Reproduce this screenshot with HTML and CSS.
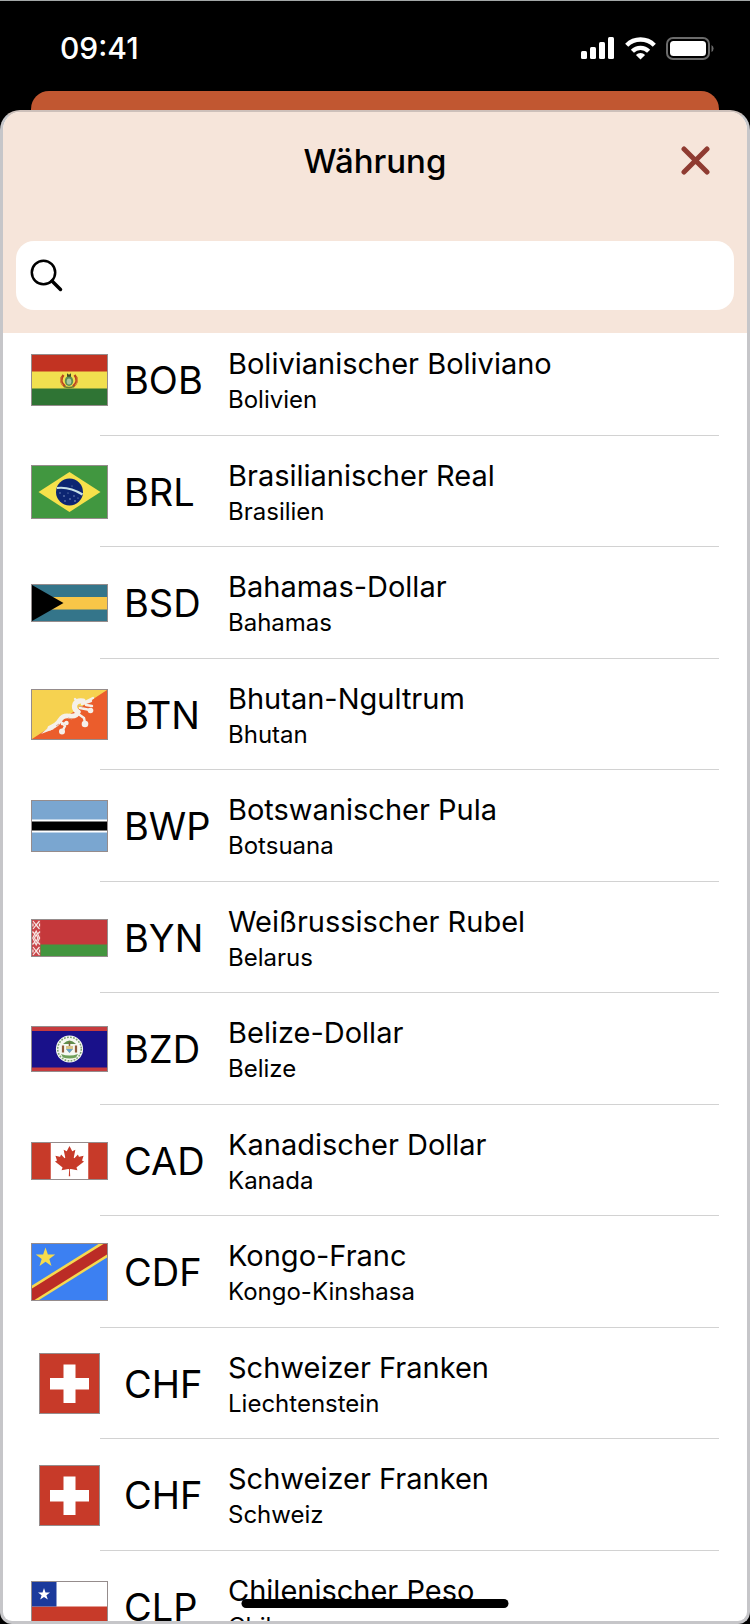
FILE: index.html
```html
<!DOCTYPE html>
<html lang="de">
<head>
<meta charset="utf-8">
<meta name="viewport" content="width=device-width, initial-scale=1">
<title>Währung</title>
<link rel="stylesheet" href="styles.css">
</head>
<body>
<div class="screen">
  <div class="status-bar">
    <time class="clock">09:41</time>
    <div class="status-icons">
      <svg width="34" height="22" viewBox="0 0 34 22" fill="#fff" aria-hidden="true"><rect x="0" y="14" width="6" height="8" rx="1.5"/><rect x="9" y="10" width="6" height="12" rx="1.5"/><rect x="18" y="5" width="6" height="17" rx="1.5"/><rect x="27" y="0" width="6" height="22" rx="1.5"/></svg>
      <svg width="31" height="23" viewBox="0 0 31 23" aria-hidden="true"><g fill="none" stroke="#fff" stroke-width="4.4"><path d="M1.7 8.2a19.6 19.6 0 0 1 27.6 0"/><path d="M7.4 14.2a11.5 11.5 0 0 1 16.2 0"/></g><path d="M15.500 22.500l-4.600-4.600a6.600 6.600 0 0 1 9.200 0z" fill="#fff"/></svg>
      <svg width="49" height="23" viewBox="0 0 49 23" aria-hidden="true"><rect x="1" y="1" width="42" height="21" rx="6" fill="none" stroke="#6b6b6b" stroke-width="2"/><rect x="4" y="4" width="36" height="15" rx="3.500" fill="#fff"/><path d="M45.500 8a4 4 0 0 1 0 7z" fill="#6b6b6b"/></svg>
    </div>
  </div>
  <div class="card-behind"></div>
  <main class="sheet">
    <header class="sheet-header">
      <div class="title-bar">
        <h1 class="title">Währung</h1>
        <button class="close" type="button" aria-label="Schließen">
          <svg width="30" height="30" viewBox="0 0 30 30" aria-hidden="true"><path d="M3 3l23 23M26 3l-23 23" stroke="#8f3b31" stroke-width="5" stroke-linecap="round"/></svg>
        </button>
      </div>
      <label class="search">
        <svg width="34" height="34" viewBox="0 0 34 34" fill="none" stroke="#000" aria-hidden="true"><circle cx="13.500" cy="13.500" r="11.700" stroke-width="2.500"/><path d="M22 22l8.500 8.500" stroke-width="3.500" stroke-linecap="round"/></svg>
        <input class="search-input" type="search" aria-label="Währung suchen">
      </label>
    </header>
    <div class="scroller">
      <ul class="list">
        <li class="item"><button class="row" type="button">
          <svg class="flag" width="77" height="52" viewBox="0 0 75 50" aria-hidden="true"><path fill="#c23322" d="M0 0h75v17H0z"/><path fill="#f1e04f" d="M0 16.500h75V34H0z"/><path fill="#2f7434" d="M0 33.500h75V50H0z"/><path d="M31.500 20q-5 6 1.500 11.500M42.500 20q5 6-1.500 11.500" fill="none" stroke="#b9431f" stroke-width="2.400"/><path d="M29 22q-1.500 5 2 8.500M45 22q1.500 5-2 8.500" fill="none" stroke="#d98a3a" stroke-width="1.200"/><path d="M32 31.500q5 2 10 0" fill="none" stroke="#6d7b32" stroke-width="1.400"/><ellipse cx="37" cy="26" rx="4.200" ry="5" fill="#5b8f55"/><ellipse cx="37" cy="26.500" rx="2.300" ry="3" fill="#a9c8a0"/><path d="M35 18.200l2 1.600 2-1.600v3.600h-4z" fill="#444b27"/></svg>
          <span class="code">BOB</span><span class="text"><span class="name">Bolivianischer Boliviano</span><span class="country">Bolivien</span></span></button></li>
        <li class="item"><button class="row" type="button">
          <svg class="flag" width="77" height="54" viewBox="0 0 75 52" aria-hidden="true"><path fill="#419740" d="M0 0h75v52H0z"/><path fill="#f7e14b" d="M6.500 26l31-20 31 20-31 20z"/><circle cx="37.500" cy="26" r="13.500" fill="#0c2572"/><path d="M24.800 22q13-1.600 25.700 6.500" fill="none" stroke="#c7e0e6" stroke-width="2.200"/><g fill="#8fa4cc"><circle cx="28" cy="27" r=".7"/><circle cx="32" cy="30" r=".8"/><circle cx="36" cy="27" r=".6"/><circle cx="38" cy="33" r=".8"/><circle cx="42" cy="30" r=".7"/><circle cx="43" cy="35" r=".8"/><circle cx="33" cy="35" r=".7"/><circle cx="46" cy="32" r=".6"/><circle cx="40" cy="20" r=".6"/></g></svg>
          <span class="code">BRL</span><span class="text"><span class="name">Brasilianischer Real</span><span class="country">Brasilien</span></span></button></li>
        <li class="item"><button class="row" type="button">
          <svg class="flag" width="77" height="38" viewBox="0 0 75 36" aria-hidden="true"><path fill="#34758a" d="M0 0h75v36H0z"/><path fill="#f8c648" d="M0 12h75v12.500H0z"/><path d="M0 0l31.500 18L0 36z"/></svg>
          <span class="code">BSD</span><span class="text"><span class="name">Bahamas-Dollar</span><span class="country">Bahamas</span></span></button></li>
        <li class="item"><button class="row" type="button">
          <svg class="flag" width="77" height="51" viewBox="0 0 75 49" aria-hidden="true"><path fill="#f6d250" d="M0 0h75v49H0z"/><path fill="#eb5d2c" d="M75 0v49H0z"/><g fill="none" stroke="#f5f0ea" stroke-linecap="round" stroke-linejoin="round"><path d="M18 38q7-3 10-8 3-5 9-4 8 1 9-4" stroke-width="4.800"/><path d="M46 22q-5-3-3-8 2-4 8-3" stroke-width="5.200"/><path d="M29 32l4 4-3 6M45 23l7 5 1 5M48 18l10 2M50 14l9-3M53 12l8-4M30 34l5-1M43 9l3 3M54 15l6 1" stroke-width="2.400"/></g><g fill="#f5f0ea"><circle cx="30" cy="41.500" r="3"/><circle cx="53" cy="34" r="3.300"/><circle cx="58.500" cy="20.500" r="2.800"/><circle cx="34.500" cy="33" r="2.200"/><path d="M9 44l9-8 4 3z"/></g><path d="M46 16l5 1M36 28l4 1M24 36l3-2" stroke="#d9a18a" stroke-width="1"/></svg>
          <span class="code">BTN</span><span class="text"><span class="name">Bhutan-Ngultrum</span><span class="country">Bhutan</span></span></button></li>
        <li class="item"><button class="row" type="button">
          <svg class="flag" width="77" height="52" viewBox="0 0 75 50" aria-hidden="true"><path fill="#7aa6d0" d="M0 0h75v50H0z"/><path fill="#fff" d="M0 18.500h75v13H0z"/><path d="M0 20.500h75v9H0z"/></svg>
          <span class="code">BWP</span><span class="text"><span class="name">Botswanischer Pula</span><span class="country">Botsuana</span></span></button></li>
        <li class="item"><button class="row" type="button">
          <svg class="flag" width="77" height="38" viewBox="0 0 75 36" aria-hidden="true"><path fill="#c5383b" d="M0 0h75v25H0z"/><path fill="#43953f" d="M0 24.500h75V36H0z"/><path fill="#c9464a" d="M0 0h8.500v36H0z"/><g fill="none" stroke="#f8e9e6" stroke-width="1.200"><path d="M1 1l3.200 4L7.500 1M1 9l3.200-4 3.300 4M1 3.500v3M7.500 3.500v3"/><path d="M4.200 11L.8 18l3.400 7 3.400-7zM4.200 14.500L2.500 18l1.700 3.500L5.900 18zM.5 11.500l1.800 2M8 11.500l-1.800 2M.5 24.500l1.800-2M8 24.500l-1.800-2"/><path d="M1 27l3.200 4 3.300-4M1 35l3.200-4 3.300 4M1 29.500v3M7.500 29.500v3"/></g></svg>
          <span class="code">BYN</span><span class="text"><span class="name">Weißrussischer Rubel</span><span class="country">Belarus</span></span></button></li>
        <li class="item"><button class="row" type="button">
          <svg class="flag" width="77" height="46" viewBox="0 0 75 44" aria-hidden="true"><path fill="#c63b3e" d="M0 0h75v44H0z"/><path fill="#19118a" d="M0 4h75v36.500H0z"/><circle cx="37.500" cy="22" r="13.600" fill="#f6f8f2"/><circle cx="37.500" cy="22" r="11.800" fill="none" stroke="#7fa572" stroke-width="1.500" stroke-dasharray="1.800 1.300"/><path d="M31 17q6.500-7 13 0z" fill="#618d4b"/><path d="M37.500 15v5" stroke="#7d6540" stroke-width="1.500"/><path d="M34 19h7v3l-3.500 4-3.500-4z" fill="#d8c58a"/><path d="M34 22h7l-3.500 4z" fill="#69a3c6"/><path d="M31 18.500v7M44 18.500v7" stroke="#8d5c3b" stroke-width="2.200"/><path d="M29 27q8.500 3 17 0l-2 3.500q-6.500 2-13 0z" fill="#6fa05a"/></svg>
          <span class="code">BZD</span><span class="text"><span class="name">Belize-Dollar</span><span class="country">Belize</span></span></button></li>
        <li class="item"><button class="row" type="button">
          <svg class="flag" width="77" height="38" viewBox="0 0 9600 4800" preserveAspectRatio="none" aria-hidden="true"><path fill="#c73a29" d="M0 0h9600v4800H0z"/><path fill="#fff" d="m2400 0h4800v4800h-4800zm2490 4430-45-863a95 95 0 0 1 111-98l859 151-116-320a65 65 0 0 1 20-73l941-762-212-99a65 65 0 0 1-34-79l186-572-542 115a65 65 0 0 1-73-38l-105-247-423 454a65 65 0 0 1-111-57l204-1052-327 189a65 65 0 0 1-91-27l-332-652-332 652a65 65 0 0 1-91 27l-327-189 204 1052a65 65 0 0 1-111 57l-423-454-105 247a65 65 0 0 1-73 38l-542-115 186 572a65 65 0 0 1-34 79l-212 99 941 762a65 65 0 0 1 20 73l-116 320 859-151a95 95 0 0 1 111 98l-45 863z"/></svg>
          <span class="code">CAD</span><span class="text"><span class="name">Kanadischer Dollar</span><span class="country">Kanada</span></span></button></li>
        <li class="item"><button class="row" type="button">
          <svg class="flag" width="77" height="58" viewBox="0 0 75 56" aria-hidden="true"><path fill="#3c80f2" d="M0 0h75v56H0z"/><path fill="#f6d950" d="M0 41.500L66.500 0H75v13.500L7 56H0z"/><path fill="#bb2c26" d="M0 44.500L71.500 0H75v10.500L2.500 56H0z"/><path fill="#f6dc4c" d="M13.500 3.500l2.400 7h7.300l-5.900 4.400 2.200 7.100-6-4.300-6 4.300 2.200-7.100-5.900-4.400h7.300z"/></svg>
          <span class="code">CDF</span><span class="text"><span class="name">Kongo-Franc</span><span class="country">Kongo-Kinshasa</span></span></button></li>
        <li class="item"><button class="row" type="button">
          <svg class="flag" width="61" height="61" viewBox="0 0 59 59" aria-hidden="true"><path fill="#c73a29" d="M0 0h59v59H0z"/><path fill="#fff" d="M23.500 10.500h12v13.500h13.500v11.500H35.500v13.500h-12V35.500H10V24h13.500z"/></svg>
          <span class="code">CHF</span><span class="text"><span class="name">Schweizer Franken</span><span class="country">Liechtenstein</span></span></button></li>
        <li class="item"><button class="row" type="button">
          <svg class="flag" width="61" height="61" viewBox="0 0 59 59" aria-hidden="true"><path fill="#c73a29" d="M0 0h59v59H0z"/><path fill="#fff" d="M23.500 10.500h12v13.500h13.500v11.500H35.500v13.500h-12V35.500H10V24h13.500z"/></svg>
          <span class="code">CHF</span><span class="text"><span class="name">Schweizer Franken</span><span class="country">Schweiz</span></span></button></li>
        <li class="item"><button class="row" type="button">
          <svg class="flag" width="77" height="51" viewBox="0 0 75 49" aria-hidden="true"><path fill="#fff" d="M0 0h75v25H0z"/><path fill="#c73a29" d="M0 24.500h75V49H0z"/><path fill="#1b3a9c" d="M0 0h24.500v24.500H0z"/><path fill="#fff" d="M12 6l1.500 4.400h4.500l-3.600 2.800 1.400 4.400-3.800-2.700-3.800 2.700 1.400-4.400L6 10.400h4.500z"/></svg>
          <span class="code">CLP</span><span class="text"><span class="name">Chilenischer Peso</span><span class="country">Chile</span></span></button></li>
      </ul>
    </div>
  </main>
  <div class="home-indicator"></div>
</div>
</body>
</html>
```
FILE: styles.css
```css
* {
  box-sizing: border-box;
}

body {
  margin: 0;
  background: #000;
  color: #000;
  font-family: Inter, "Liberation Sans", sans-serif;
}

button {
  padding: 0;
  border: 0;
  background: none;
  color: inherit;
  font: inherit;
}

.screen {
  position: relative;
  display: flex;
  flex-direction: column;
  height: 100vh;
  overflow: hidden;
  border-top: 1px solid #a3a7a7;
}

.status-bar {
  display: flex;
  flex: none;
  align-items: center;
  justify-content: space-between;
  height: 90px;
  padding: 4px 35px 0 60px;
  color: #fff;
}

.clock {
  font-size: 30px;
  font-weight: 500;
  line-height: 36px;
}

.status-icons {
  display: flex;
  align-items: center;
  gap: 10px;
}

.card-behind {
  flex: none;
  height: 19px;
  margin: 0 31px;
  border-radius: 18px 18px 0 0;
  background: #c15731;
}

.sheet {
  display: flex;
  flex: 1;
  flex-direction: column;
  min-height: 0;
  overflow: hidden;
  border: 3px solid #c6c6c9;
  border-top: 2px solid #cdc0ba;
  border-radius: 20px 20px 12px 12px;
  background: #fff;
}

.sheet-header {
  flex: none;
  padding: 0 13px 23px;
  background: #f6e5da;
}

.title-bar {
  display: grid;
  grid-template-columns: 60px 1fr 60px;
  align-items: center;
  height: 98px;
  margin-bottom: 31px;
}

.title {
  grid-column: 2;
  margin: 0;
  font-size: 33px;
  font-weight: 500;
  line-height: 40px;
  text-align: center;
}

.close {
  display: flex;
  justify-content: flex-end;
  padding: 10px 23px 10px 7px;
}

.search {
  display: flex;
  align-items: center;
  gap: 12px;
  height: 69px;
  padding: 0 14px;
  border-radius: 18px;
  background: #fff;
}

.search-input {
  flex: 1;
  min-width: 0;
  height: 48px;
  padding: 0;
  border: 0;
  outline: 0;
  background: transparent;
  font: inherit;
  font-size: 29px;
}

.scroller {
  flex: 1;
  min-height: 0;
  overflow: hidden;
}

/* The list is scrolled a little, so its first row starts under the header. */
.list {
  display: grid;
  grid-auto-rows: 112px 111px;
  margin: -9px 0 0;
  padding: 0;
  list-style: none;
}

.item {
  padding: 0 28px;
  background: linear-gradient(#d2d2d2, #d2d2d2) no-repeat 97px 100% / calc(100% - 125px) 1px;
}

.row {
  display: grid;
  grid-template-columns: 77px 88px 1fr;
  column-gap: 16px;
  align-items: center;
  width: 100%;
  height: 100%;
  text-align: left;
}

.flag {
  justify-self: center;
  border: 1px solid #958c8c;
}

.code {
  font-size: 38px;
  line-height: 48px;
  white-space: nowrap;
}

.text {
  display: flex;
  flex-direction: column;
  padding-top: 2px;
}

.name {
  font-size: 29px;
  line-height: 38px;
}

.country {
  font-size: 24px;
  line-height: 34px;
}

.home-indicator {
  position: absolute;
  bottom: 16px;
  left: 50%;
  width: 267px;
  height: 9px;
  border-radius: 5px;
  background: #000;
  transform: translateX(-50%);
}
```
